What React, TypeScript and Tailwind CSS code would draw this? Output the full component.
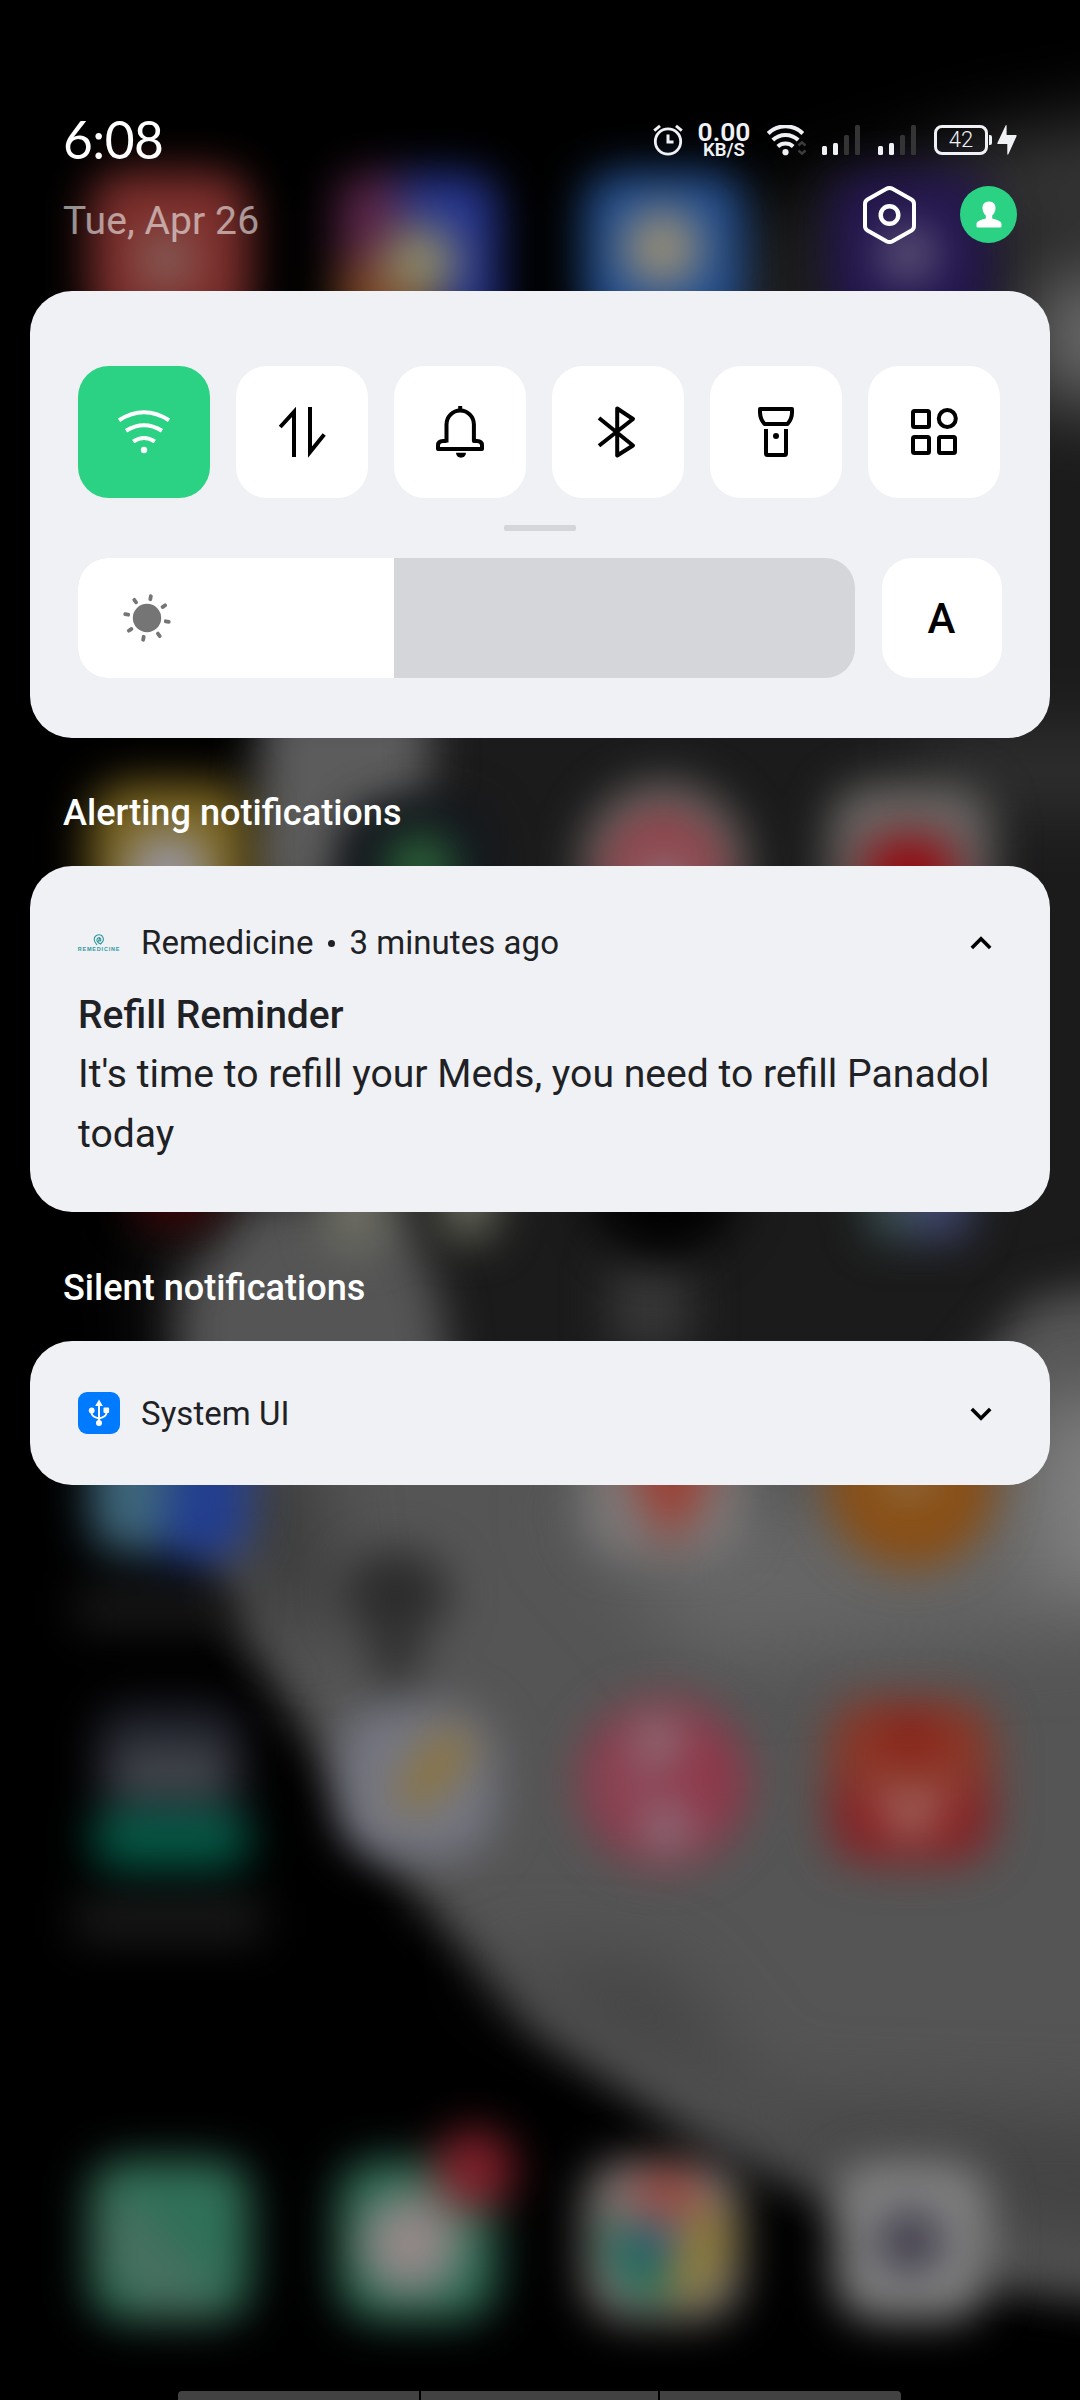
import React from "react";

function Wallpaper() {
  return (
    <svg className="absolute inset-0" width="1080" height="2400" viewBox="0 0 1080 2400" aria-hidden="true">
      <defs>
        <filter id="soft" x="-200" y="-200" width="1480" height="2800" filterUnits="userSpaceOnUse" colorInterpolationFilters="sRGB">
          <feGaussianBlur stdDeviation="22" />
        </filter>
        <filter id="wide" x="-200" y="-200" width="1480" height="2800" filterUnits="userSpaceOnUse" colorInterpolationFilters="sRGB">
          <feGaussianBlur stdDeviation="38" />
        </filter>
      </defs>
      <rect width="1080" height="2400" fill="#000" />
      <g filter="url(#wide)">
        <path d="M1200 90 L1000 130 L800 185 L700 240 L600 400 L400 700 L260 740 L250 860 L240 1000 L150 1240 L160 1400 L400 1500 L1200 1600 Z" fill="#1b1b1b" />
        <path d="M1200 110 L950 150 L940 220 L1200 240 Z" fill="#363636" />
        <path d="M1030 270 H1200 V400 H1030 Z" fill="#6a6a6a" />
        <path d="M900 740 H1200 V800 H960 Z" fill="#363636" />
      </g>
      <g filter="url(#soft)">
        <path d="M265 700 H430 L430 790 L345 830 L335 900 H250 Z" fill="#5c5c5c" />
        <path d="M180 1290 L255 1200 H400 L440 1300 L450 1390 L700 1425 L940 1410 L1030 1300 L1200 1270 V2310 L998 2288 L813 2188 L689 2131 L537 2032 L413 1891 L324 1762 L230 1615 L180 1480 Z" fill="#555" />
        <rect x="610" y="1260" width="80" height="90" fill="#363636" />
      </g>
      <g filter="url(#wide)">
        <path d="M560 1500 H820 L1000 1460 L1200 1420 V1620 L700 1660 Z" fill="#666" />
        <path d="M1030 1400 H1200 V1590 H1040 Z" fill="#808080" />
        <path d="M220 1450 H310 L330 1640 L260 1620 Z" fill="#383838" />
        <path d="M470 1960 L660 1970 L780 2120 L660 2060 Z" fill="#414141" />
        <path d="M700 2100 L1200 2120 V2270 L1000 2240 L800 2160 Z" fill="#444" />
      </g>
      <g filter="url(#soft)">
        {/* First row */}
        <rect x="90" y="172" width="160" height="160" rx="34" fill="#7e2f2c" />
        <circle cx="166" cy="260" r="28" fill="#86645e" />
        <path d="M338 200 Q338 174 371 174 H410 L395 260 V330 H338 Z" fill="#5a2548" />
        <path d="M395 174 H465 Q498 174 498 206 V340 H460 L410 250 Z" fill="#263690" />
        <path d="M338 262 H420 L440 340 H338 Z" fill="#7a4424" />
        <circle cx="420" cy="262" r="38" fill="#8c8868" />
        <rect x="584" y="172" width="160" height="160" rx="34" fill="#245092" />
        <circle cx="662" cy="248" r="40" fill="#948c78" />
        <rect x="830" y="172" width="160" height="160" rx="34" fill="#241650" />
        <circle cx="908" cy="254" r="28" fill="#645c7c" />

        {/* Second row */}
        <rect x="90" y="783" width="160" height="158" rx="40" fill="#7c6620" />
        <circle cx="168" cy="874" r="42" fill="#97959e" />
        <rect x="350" y="805" width="140" height="150" rx="36" fill="#11151e" />
        <circle cx="420" cy="868" r="36" fill="#2c6238" />
        <circle cx="664" cy="864" r="83" fill="#6a6866" />
        <circle cx="664" cy="872" r="60" fill="#943c44" />
        <circle cx="664" cy="882" r="26" fill="#858088" />
        <rect x="829" y="784" width="163" height="158" rx="42" fill="#6a6866" />
        <rect x="864" y="836" width="92" height="80" rx="26" fill="#920c12" />

        {/* Third row */}
        <rect x="130" y="1130" width="90" height="96" rx="30" fill="#3a0204" />
        <rect x="325" y="1110" width="60" height="138" rx="20" fill="#717166" />
        <rect x="440" y="1110" width="56" height="130" rx="20" fill="#68695c" />
        <circle cx="664" cy="1180" r="78" fill="#020202" />
        <rect x="868" y="1110" width="50" height="130" rx="20" fill="#3c5254" />
        <rect x="910" y="1110" width="60" height="130" rx="20" fill="#404870" />

        {/* Fourth row */}
        <path d="M90 1420 H178 V1552 H122 Q90 1552 90 1515 Z" fill="#3e667a" />
        <path d="M175 1420 H250 V1520 Q250 1560 216 1560 H160 Z" fill="#223e90" />
        <rect x="584" y="1410" width="160" height="146" rx="40" fill="#7c7878" />
        <path d="M622 1440 H708 V1490 L672 1546 L645 1510 Z" fill="#9c4034" />
        <circle cx="911" cy="1484" r="84" fill="#8a4e14" />
        <circle cx="908" cy="1474" r="28" fill="#8c6c44" />
        <ellipse cx="396" cy="1594" rx="54" ry="44" fill="#2c2c2c" />
        <ellipse cx="395" cy="1650" rx="26" ry="40" fill="#303030" />
        <rect x="75" y="1588" width="160" height="40" fill="#1a1a1a" />

        {/* Fifth row */}
        <rect x="98" y="1706" width="144" height="112" rx="28" fill="#23252f" />
        <rect x="112" y="1752" width="118" height="38" rx="14" fill="#4a4c52" />
        <rect x="92" y="1810" width="158" height="58" rx="24" fill="#045a46" />
        <rect x="75" y="1900" width="188" height="40" fill="#1c1c1c" />
        <rect x="338" y="1704" width="158" height="156" rx="54" fill="#757782" />
        <path d="M394 1796 L444 1728 L476 1744 L420 1812 Z" fill="#92742c" />
        <circle cx="664" cy="1782" r="84" fill="#8e384a" />
        <circle cx="657" cy="1742" r="26" fill="#8c747c" />
        <circle cx="666" cy="1826" r="26" fill="#8c7480" />
        <circle cx="622" cy="1785" r="16" fill="#8a5868" />
        <path d="M829 1745 Q829 1700 872 1700 H950 Q993 1700 993 1745 V1790 H829 Z" fill="#8a3626" />
        <path d="M829 1785 H993 V1820 Q993 1863 950 1863 H872 Q829 1863 829 1820 Z" fill="#862224" />
        <circle cx="911" cy="1735" r="26" fill="#8a2018" />
        <path d="M868 1772 L911 1804 L954 1772 L934 1820 L911 1840 L888 1820 Z" fill="#a8786e" />

        {/* Dock */}
        <rect x="90" y="2160" width="160" height="160" rx="34" fill="#307058" />
        <path d="M110 2180 L230 2310 L150 2316 L100 2260 Z" fill="#487060" />
        <rect x="338" y="2160" width="158" height="160" rx="38" fill="#307058" />
        <circle cx="410" cy="2244" r="50" fill="#928888" />
        <circle cx="474" cy="2170" r="41" fill="#80202a" />
        <rect x="585" y="2160" width="156" height="160" rx="40" fill="#7c7876" />
        <path d="M618 2210 L650 2172 H690 L712 2214 Z" fill="#a04038" />
        <path d="M608 2220 L650 2240 L670 2296 L640 2300 Q604 2260 608 2220 Z" fill="#04704a" />
        <path d="M690 2210 H728 Q738 2270 690 2304 L666 2294 Z" fill="#907c34" />
        <circle cx="654" cy="2244" r="22" fill="#305078" />
        <rect x="835" y="2162" width="154" height="158" rx="42" fill="#828282" />
        <circle cx="910" cy="2242" r="32" fill="#3c3848" />
      </g>
    </svg>
  );
}

function AlarmIcon() {
  return (
    <svg width="30" height="32" viewBox="0 0 30 32" fill="none" stroke="#f0f1f5">
      <circle cx="15" cy="17.500" r="12.700" strokeWidth="2.800" />
      <path d="M15 10.500V18H20.500" strokeWidth="3" />
      <path d="M1.200 6.600L7 1.800M28.800 6.600L23 1.800" strokeWidth="3" />
    </svg>
  );
}

function StatusWifi() {
  return (
    <svg width="40" height="31" viewBox="0 0 40 31" fill="none">
      <g stroke="#f0f1f5" strokeWidth="4">
        <path d="M1.200 8.500A24.500 24.500 0 0 1 35.800 8.500" />
        <path d="M5.800 15A18.500 18.500 0 0 1 31.200 15" />
        <path d="M10.800 21.500A11.500 11.500 0 0 1 26.200 21.500" />
      </g>
      <circle cx="18.500" cy="27.200" r="3.100" fill="#f0f1f5" />
      <path d="M31.500 20.500L35 17.300L38.500 20.500M31.500 25.500L35 28.700L38.500 25.500" stroke="#3c3c3c" strokeWidth="2.400" />
    </svg>
  );
}

function Signal() {
  return (
    <div className="flex h-[30px] w-[38px] items-end justify-between">
      <span className="h-[9px] w-[5px] rounded-[1.500px] bg-[#f0f1f5]" />
      <span className="h-[12px] w-[5px] rounded-[1.500px] bg-[#f0f1f5]" />
      <span className="h-[20px] w-[5px] rounded-[1.500px] bg-[#343434]" />
      <span className="h-[30px] w-[5px] rounded-[1.500px] bg-[#343434]" />
    </div>
  );
}

function StatusBar() {
  return (
    <div className="flex h-[50px] items-center pl-[63px] pr-[63px]">
      <span className="mb-[3px] font-['Lato'] text-[51.500px] leading-[50px] tracking-[-0.500px] text-white">6:08</span>
      <div className="ml-auto flex items-center">
        <AlarmIcon />
        <div className="ml-[13px] flex w-[56px] flex-col items-center text-[#f0f1f5]">
          <span className="font-['Roboto'] text-[26.500px] font-semibold leading-[19px]">0.00</span>
          <span className="mt-[2px] font-['Roboto'] text-[18.500px] font-semibold leading-[15px]">KB/S</span>
        </div>
        <div className="ml-[15px] flex"><StatusWifi /></div>
        <div className="ml-[15px]"><Signal /></div>
        <div className="ml-[18px]"><Signal /></div>
        <div className="ml-[18px] flex h-[30px] w-[54px] items-center justify-center rounded-[8px] border-[3px] border-[#f0f1f5] font-['Roboto'] text-[22px] font-light leading-none text-[#f0f1f5]">
          <span>42</span>
        </div>
        <span className="ml-[1px] h-[10px] w-[3px] rounded-r-[2px] bg-[#f0f1f5]" />
        <svg className="ml-[5px]" width="20" height="30" viewBox="0 0 20 30" fill="#f0f1f5">
          <path d="M8.600 0.500Q9.600 -0.500 9.600 1V10H19Q20 10 19.400 11.500L11.500 29Q10.300 30.500 10.300 28.800V19H1Q0 19 0.500 17.800Z" />
        </svg>
      </div>
    </div>
  );
}

function WifiIcon() {
  return (
    <svg width="60" height="60" viewBox="0 0 60 60" fill="none">
      <g stroke="#fff" strokeWidth="4">
        <path d="M5 18.200Q30 2.200 55 18.200" />
        <path d="M12 28.700Q30 17.700 48 28.700" />
        <path d="M19.200 39.500Q30 32.500 40.800 39.500" />
      </g>
      <circle cx="30" cy="48" r="3.200" fill="#fff" />
    </svg>
  );
}

function DataIcon() {
  return (
    <svg width="60" height="60" viewBox="0 0 60 60" fill="none" stroke="#000" strokeWidth="4">
      <path d="M22 55V10L8.200 25" strokeMiterlimit="10" />
      <path d="M38 5V50L52.200 32.500" strokeMiterlimit="10" />
    </svg>
  );
}

function BellIcon() {
  return (
    <svg width="60" height="60" viewBox="0 0 60 60" fill="none" stroke="#000" strokeWidth="4">
      <path d="M16.500 40.500V22.500A13.700 14 0 0 1 43.900 22.500V39H47Q52 39 52 43.500V47H8V43.500Q8 39 13 39H16.500" strokeLinejoin="round" />
      <path d="M30.200 4V9" />
      <path d="M26 50.800H36A5 5 0 0 1 26 50.800Z" fill="#000" stroke="none" />
    </svg>
  );
}

function BluetoothIcon() {
  return (
    <svg width="60" height="60" viewBox="0 0 60 60" fill="none" stroke="#000" strokeWidth="4" strokeLinejoin="round">
      <path d="M11 16L45 43.500L29.200 53.500V6.500L45 17L11 43.800" />
    </svg>
  );
}

function FlashlightIcon() {
  return (
    <svg width="60" height="60" viewBox="0 0 60 60" fill="none" stroke="#000" strokeWidth="4" strokeLinejoin="round">
      <path d="M14 7H46V10.500Q46 17 41.500 22H18.500Q14 17 14 10.500Z" />
      <path d="M20 27V51.500Q20 53 21.500 53H38.500Q40 53 40 51.500V27" />
      <circle cx="30" cy="34" r="3" fill="#000" stroke="none" />
    </svg>
  );
}

function AppsIcon() {
  return (
    <svg width="60" height="60" viewBox="0 0 60 60" fill="none" stroke="#000" strokeWidth="4">
      <rect x="9" y="9" width="16" height="16" rx="1.500" />
      <circle cx="43.300" cy="16.500" r="8.500" />
      <rect x="9" y="35" width="16" height="16" rx="1.500" />
      <rect x="35" y="35" width="16" height="16" rx="1.500" />
    </svg>
  );
}

function SunIcon() {
  const angles = [10, 55, 100, 145, 190, 235, 280, 325];
  return (
    <svg width="50" height="50" viewBox="-25 -25 50 50" fill="#757575">
      <circle r="14.200" />
      {angles.map((a) => (
        <rect key={a} x="-1.900" y="-24" width="3.800" height="6.800" rx="1.700" transform={`rotate(${a})`} />
      ))}
    </svg>
  );
}

function Tile({ active, children }: { active?: boolean; children: React.ReactNode }) {
  return (
    <div className={`flex h-[132px] w-[132px] items-center justify-center rounded-[31px] ${active ? "bg-[#2bd283]" : "bg-white"}`}>
      {children}
    </div>
  );
}

function QuickSettings() {
  return (
    <section className="mx-[30px] mt-[48px] h-[447px] rounded-[42px] bg-[#f0f1f5] px-[48px] pt-[75px]">
      <div className="flex gap-[26px]">
        <Tile active><WifiIcon /></Tile>
        <Tile><DataIcon /></Tile>
        <Tile><BellIcon /></Tile>
        <Tile><BluetoothIcon /></Tile>
        <Tile><FlashlightIcon /></Tile>
        <Tile><AppsIcon /></Tile>
      </div>
      <div className="mx-auto mt-[27px] h-[6px] w-[72px] rounded-[2px] bg-[#d5d6d9]" />
      <div className="mt-[27px] flex gap-[27px]">
        <div className="flex h-[120px] w-[777px] overflow-hidden rounded-[30px] bg-[#d5d6da]">
          <div className="flex w-[316px] items-center bg-white pl-[44px]">
            <SunIcon />
          </div>
        </div>
        <div className="flex h-[120px] w-[120px] items-center justify-center rounded-[30px] bg-white pr-px font-['Roboto'] text-[42px] font-medium text-black">
          A
        </div>
      </div>
    </section>
  );
}

function Chevron({ up }: { up?: boolean }) {
  return (
    <svg className="ml-auto" width="22" height="14" viewBox="0 0 22 14" fill="none" stroke="#000" strokeWidth="3.600">
      <path d={up ? "M1.800 12L11 2.800L20.200 12" : "M1.800 2L11 11.200L20.200 2"} />
    </svg>
  );
}

function RemedicineLogo() {
  return (
    <div className="flex h-[18px] w-[42px] flex-col items-center">
      <svg width="12" height="12" viewBox="0 0 12 12" fill="none" stroke="#2f979b" strokeWidth="1.100">
        <path d="M4 11L2 8Q0 4 3 1.800Q6 -0.400 9 1.800Q11.500 5 9.500 8L7.500 10Q5 9 4 7Q3.500 4 6 3.500Q8.500 4 7.500 7H5.500L7 3.500" />
      </svg>
      <span className="font-['Liberation_Sans'] text-[5.500px] font-bold leading-[6px] tracking-[0.800px] text-[#2f979b]">REMEDICINE</span>
    </div>
  );
}

function UsbIcon() {
  return (
    <div className="flex h-[42px] w-[42px] items-center justify-center rounded-[9px] bg-[#007bff]">
      <svg width="22" height="28" viewBox="0 0 22 28" fill="none" stroke="#fff" strokeWidth="2">
        <path d="M11 5V24M3.500 12V14Q4 18 11 19.500Q18 18 18.500 14V12" />
        <path d="M11 0.500L14.800 7H7.200Z" fill="#fff" stroke="none" />
        <circle cx="3.700" cy="11.500" r="2.900" fill="#fff" stroke="none" />
        <rect x="15.500" y="8.500" width="5.600" height="5.600" rx="1" fill="#fff" stroke="none" />
        <circle cx="11" cy="24" r="3" fill="#fff" stroke="none" />
      </svg>
    </div>
  );
}

export default function App() {
  return (
    <div className="relative h-[2400px] w-[1080px] overflow-hidden bg-black font-['Roboto']">
      <Wallpaper />
      <div className="relative flex h-full flex-col pt-[115px]">
        <StatusBar />
        <div className="mt-[21px] flex h-[57px] items-center pl-[63px] pr-[63px]">
          <span className="mt-[12px] text-[39px] leading-[46px] tracking-[0.100px] text-white/55">Tue, Apr 26</span>
          <svg className="ml-auto" width="53" height="58" viewBox="0 0 53 58" fill="none" stroke="#fff">
            <path d="M23.500 2.800Q26.500 1.200 29.500 2.800L48.500 13.500Q51 15 51 18V40Q51 43 48.500 44.500L29.500 55.200Q26.500 56.800 23.500 55.200L4.500 44.500Q2 43 2 40V18Q2 15 4.500 13.500Z" strokeWidth="4" />
            <circle cx="26.500" cy="29" r="8.800" strokeWidth="4.400" />
          </svg>
          <div className="ml-[44px] flex h-[57px] w-[57px] items-center justify-center rounded-full bg-[#2bd283]">
            <svg width="26" height="27" viewBox="0 0 26 27" fill="#fff">
              <path d="M13 0.500C17.500 0.500 19.800 3.500 19.500 7.500C19.300 10.500 18 13 16.200 14.500V17.500C21 19 25.500 20 25.500 23V25.200Q25.500 26.500 24 26.500H2Q0.500 26.500 0.500 25.200V23C0.500 20 5 19 9.800 17.500V14.500C8 13 6.700 10.500 6.500 7.500C6.200 3.500 8.500 0.500 13 0.500Z" />
            </svg>
          </div>
        </div>
        <QuickSettings />
        <h2 className="ml-[63px] mt-[54px] text-[36.120px] font-medium leading-[42px] text-white">Alerting notifications</h2>
        <section className="mx-[30px] mt-[32px] h-[346px] rounded-[42px] bg-[#f0f1f5] px-[48px] pt-[57px] text-[#202124]">
          <div className="flex h-[40px] items-center pr-[10px]">
            <RemedicineLogo />
            <span className="ml-[21px] text-[33px] leading-[40px] tracking-[0.050px]">Remedicine</span>
            <span className="ml-[15px] mr-[14px] h-[7px] w-[7px] rounded-full bg-[#202124]" />
            <span className="text-[33px] leading-[40px] tracking-[0.050px]">3 minutes ago</span>
            <Chevron up />
          </div>
          <h3 className="mt-[22px] text-[39px] font-medium leading-[60px]">Refill Reminder</h3>
          <p className="-mt-px text-[39.130px] leading-[60px]">It's time to refill your Meds, you need to refill Panadol today</p>
        </section>
        <h2 className="ml-[63px] mt-[55px] text-[36.120px] font-medium leading-[42px] text-white">Silent notifications</h2>
        <section className="mx-[30px] mt-[32px] flex h-[144px] items-center rounded-[42px] bg-[#f0f1f5] px-[48px] text-[#202124]">
          <UsbIcon />
          <span className="ml-[21px] mt-[2px] text-[33px] leading-[40px] tracking-[0.050px]">System UI</span>
          <div className="ml-auto mt-[2px] pr-[10px]"><Chevron /></div>
        </section>
        <div className="ml-[178px] mt-auto flex h-[9px] w-[723px] gap-[2px] overflow-hidden rounded-t-[4px]">
          <span className="w-[241px] bg-[#424242]" />
          <span className="w-[237px] bg-[#424242]" />
          <span className="w-[241px] bg-[#424242]" />
        </div>
      </div>
    </div>
  );
}
